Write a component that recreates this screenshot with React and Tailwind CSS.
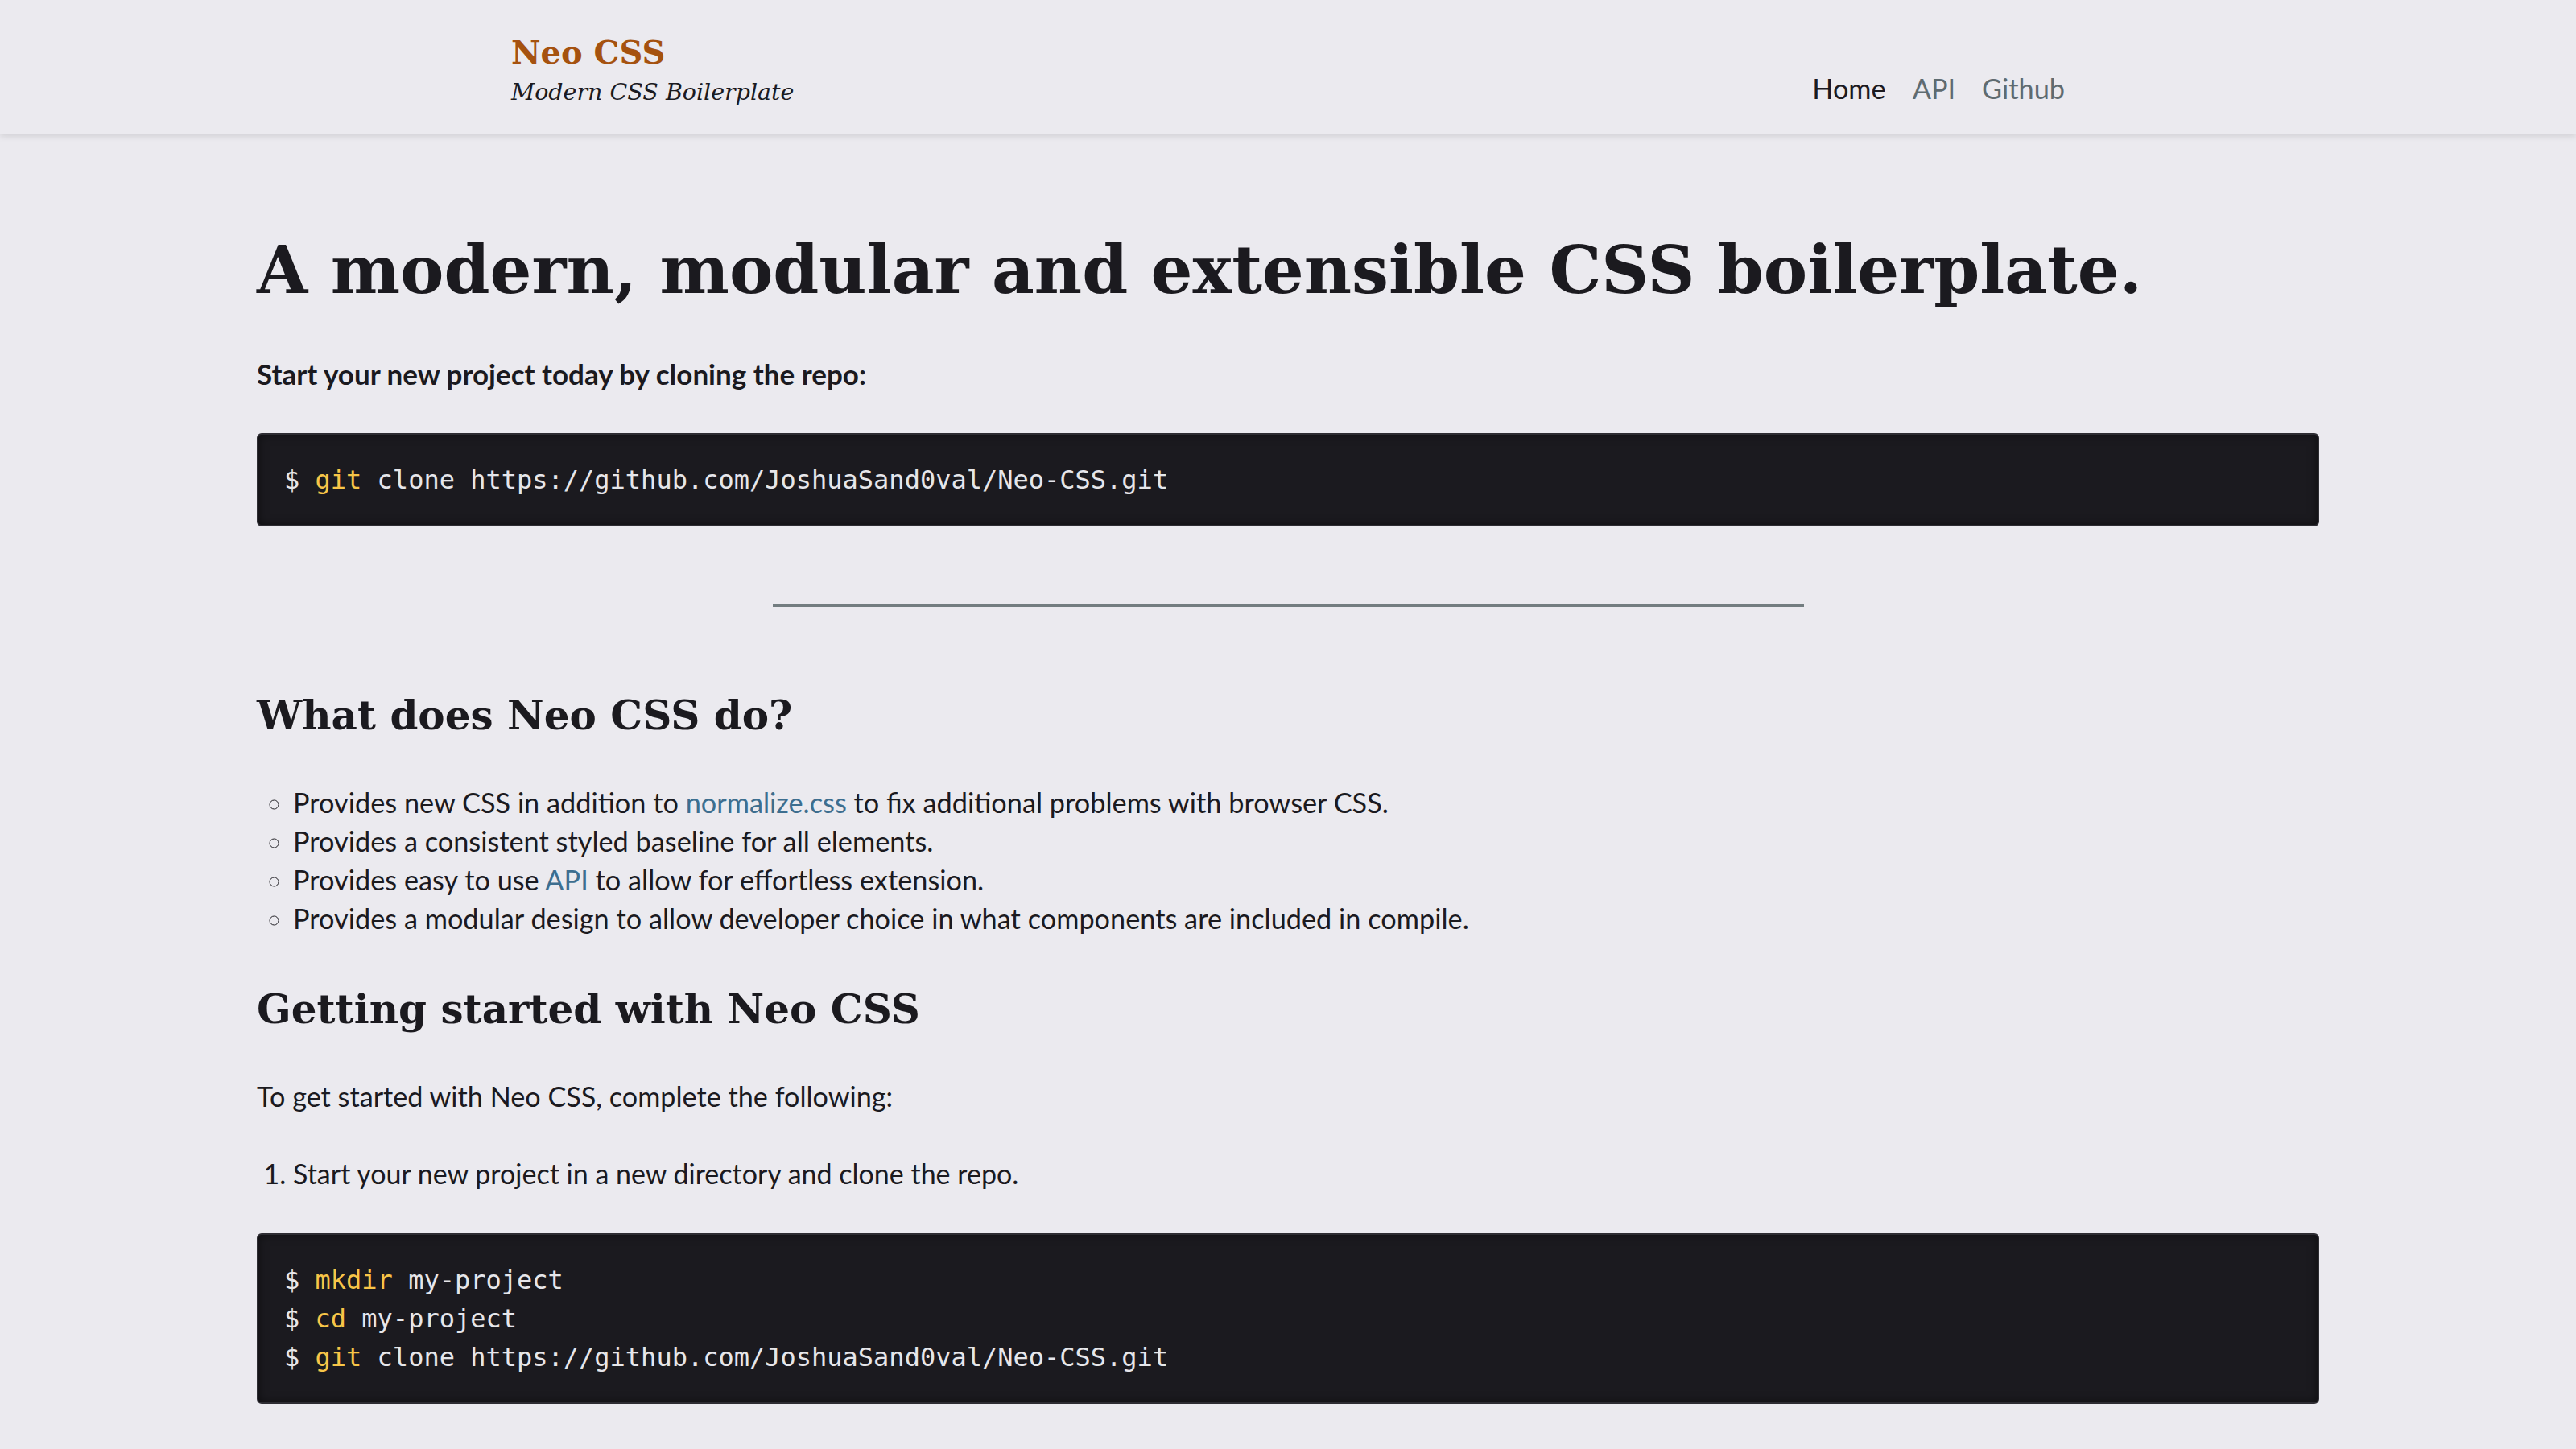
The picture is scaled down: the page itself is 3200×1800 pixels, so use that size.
import React from "react";

const serif = "font-['DejaVu_Serif',serif]";
const sans = "font-['Lato',sans-serif]";
const mono = "font-['DejaVu_Sans_Mono',monospace]";

function Code({ lines }) {
  return (
    <pre className={`${mono} bg-[#1b1a1f] border-2 border-[#2d2c32] rounded-[6px] shadow-[inset_0_0_12px_rgba(0,0,0,0.5)] px-[32px] py-[32px] text-[32px] leading-[48px] text-[#e6e6ea] m-0`}>
      {lines.map((l, i) => (
        <div key={i}>
          <span>$ </span>
          <span className="text-[#f7c548]">{l[0]}</span>
          <span> {l[1]}</span>
        </div>
      ))}
    </pre>
  );
}

export default function App() {
  return (
    <div className="min-h-[1800px] bg-[#ebeaef] text-[#1b1a1f]">
      <header className="h-[167px] bg-[#ebeaef] shadow-[0_2px_8px_rgba(0,0,0,0.12)] relative">
        <div className="mx-auto w-[1930px] h-full flex justify-between items-end">
          <div className="flex flex-col pt-[38px] pb-[32px]">
            <div className={`${serif} font-bold text-[40px] leading-[52px] text-[#a5520f]`}>Neo CSS</div>
            <div className={`${serif} italic text-[28.5px] leading-[40px] mt-[4px]`}>Modern CSS Boilerplate</div>
          </div>
          <nav className={`${sans} text-[34.3px] leading-[48px] flex gap-[33px] pb-[33px]`}>
            <span className="text-[#1b1a1f]">Home</span>
            <span className="text-[#5f6b70]">API</span>
            <span className="text-[#5f6b70]">Github</span>
          </nav>
        </div>
      </header>
      <main className="mx-auto w-[2562px] pt-[118px] pb-[60px]">
        <h1 className={`${serif} font-bold text-[81.6px] leading-[100px]`}>
          A modern, modular and extensible CSS boilerplate.
        </h1>
        <p className={`${sans} font-bold text-[35px] leading-[48px] mt-[55px]`}>
          Start your new project today by cloning the repo:
        </p>
        <div className="mt-[50px]">
          <Code lines={[["git", "clone https://github.com/JoshuaSand0val/Neo-CSS.git"]]} />
        </div>
        <div className="mt-[96px] flex justify-center">
          <div className="w-1/2 h-[4px] bg-[#737d80]" />
        </div>
        <h2 className={`${serif} font-bold text-[50px] leading-[68px] mt-[101px]`}>What does Neo CSS do?</h2>
        <ul className={`${sans} text-[34.3px] leading-[48px] list-[circle] pl-[45px] mt-[50px]`}>
          <li>
            Provides new CSS in addition to <a className="text-[#3d6e8f]">normalize.css</a> to fix additional problems with browser CSS.
          </li>
          <li>Provides a consistent styled baseline for all elements.</li>
          <li>
            Provides easy to use <a className="text-[#3d6e8f]">API</a> to allow for effortless extension.
          </li>
          <li>Provides a modular design to allow developer choice in what components are included in compile.</li>
        </ul>
        <h2 className={`${serif} font-bold text-[50px] leading-[68px] mt-[55px]`}>Getting started with Neo CSS</h2>
        <p className={`${sans} text-[34.2px] leading-[48px] mt-[50px]`}>To get started with Neo CSS, complete the following:</p>
        <ol className={`${sans} text-[34px] leading-[48px] list-decimal pl-[45px] mt-[48px]`}>
          <li>Start your new project in a new directory and clone the repo.</li>
        </ol>
        <div className="mt-[50px]">
          <Code
            lines={[
              ["mkdir", "my-project"],
              ["cd", "my-project"],
              ["git", "clone https://github.com/JoshuaSand0val/Neo-CSS.git"],
            ]}
          />
        </div>
      </main>
    </div>
  );
}
